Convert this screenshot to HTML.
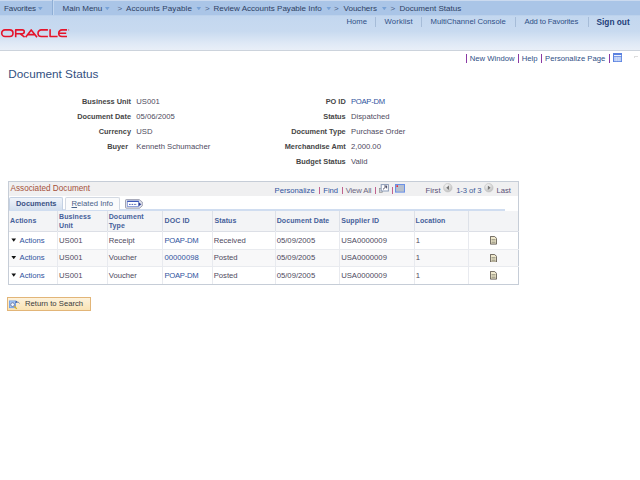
<!DOCTYPE html>
<html><head><meta charset="utf-8">
<style>
*{margin:0;padding:0;box-sizing:border-box}
html,body{width:640px;height:480px;overflow:hidden;background:#fff;font-family:"Liberation Sans",sans-serif;font-size:8px;color:#3c3c3c}
.a{position:absolute;white-space:nowrap;line-height:10px}
#nav{position:absolute;left:0;top:0;width:640px;height:16px;background:#aac5e7;border-bottom:1px solid #bcd2ec;border-top:1.2px solid #cbdaef}
#hdr{position:absolute;left:0;top:16px;width:640px;height:35px;background:linear-gradient(#c3d7ef 0%,#c8daf0 45%,#dfe9f6 80%,#e9eff8 100%);border-bottom:1px solid #ccd3dc}
.nv{top:4.1px;font-size:8.05px;color:#2e3f63}
.n2{top:17px;font-size:7.7px;color:#2f4f86}
.lbl{font-weight:bold;font-size:7.35px;color:#464646;text-align:right}
.val{font-size:7.7px;color:#4e4a5e}

.sep{position:absolute;width:1px;background:#a6bcd8}
.psep{position:absolute;width:1.3px;background:#8a3aa4}
.dd{position:absolute;top:6.8px;width:5px;height:3.4px;background:#78a2d6;clip-path:polygon(0 0,100% 0,50% 100%)}
.gt{top:4px;font-size:8px;color:#4a5f86}
.th{font-weight:bold;font-size:7.0px;letter-spacing:0.1px;color:#46609a;line-height:9px}
.td{font-size:7.7px;color:#4e4a5e}
.vl{position:absolute;width:1px;background:#e8eaef;top:211px;height:73px}
.vh{position:absolute;width:1px;background:#dde1e8;top:211px;height:20px}
.hl{position:absolute;height:1px;background:#e9ebef;left:9px;width:510px}
.gsep{position:absolute;top:187px;width:1px;height:7px;background:#c0628e}
.lnk{color:#30539e}
</style></head><body>
<div id="nav"></div>
<div id="hdr"></div>
<!-- nav row 1 -->
<div class="a nv" style="left:4px;letter-spacing:-0.13px">Favorites</div><div class="dd" style="left:37.8px"></div>
<div class="sep" style="left:51.5px;top:0;height:15px;background:#8fafd6"></div>
<div class="sep" style="left:52.5px;top:0;height:15px;background:#c4d8f0"></div>
<div class="a nv" style="left:62.5px">Main Menu</div><div class="dd" style="left:104.8px"></div>
<div class="a gt" style="left:117.5px">&gt;</div>
<div class="a nv" style="left:126px;letter-spacing:0.1px">Accounts Payable</div><div class="dd" style="left:196.3px"></div>
<div class="a gt" style="left:205px">&gt;</div>
<div class="a nv" style="left:213.5px">Review Accounts Payable Info</div><div class="dd" style="left:326.3px"></div>
<div class="a gt" style="left:334px">&gt;</div>
<div class="a nv" style="left:343.5px">Vouchers</div><div class="dd" style="left:381.8px"></div>
<div class="a gt" style="left:390.5px">&gt;</div>
<div class="a nv" style="left:399.5px">Document Status</div>
<!-- nav row 2 -->
<div class="a n2" style="left:346.5px">Home</div>
<div class="sep" style="left:375px;top:17px;height:10px"></div>
<div class="a n2" style="left:384.5px;letter-spacing:0.15px">Worklist</div>
<div class="sep" style="left:421px;top:17px;height:10px"></div>
<div class="a n2" style="left:430.5px">MultiChannel Console</div>
<div class="sep" style="left:515px;top:17px;height:10px"></div>
<div class="a n2" style="left:524.5px;letter-spacing:-0.15px">Add to Favorites</div>
<div class="sep" style="left:588px;top:17px;height:10px"></div>
<div class="a n2" style="left:596.5px;font-weight:bold;font-size:8.3px;color:#1f3f7a">Sign out</div>
<!-- logo -->
<svg class="a" style="left:0;top:29px" width="70" height="9" viewBox="0 0 70 9">
<g fill="none" stroke="#e5142b" stroke-width="1.6" stroke-linejoin="round">
<rect x="1.7" y="0.9" width="11.3" height="6.6" rx="3.3"/>
<path d="M15.7 8.2V0.9H22.3a1.9 1.9 0 0 1 0 3.9H16.5M20.3 4.8L24.6 8.2"/>
<path d="M25.6 8.2L31.2 0.9L37 8.2M27.6 5.6H34.6"/>
<path d="M47.9 0.9H41.3a3.3 3.3 0 0 0 0 6.6H47.9"/>
<path d="M50.1 0.2V7.5H57.6"/>
<path d="M67 0.9H62a3.3 3.3 0 0 0 0 6.6H67M59.2 4.2H66.2"/>
</g><circle cx="68.6" cy="0.9" r="0.6" fill="#e5142b" opacity="0.6"/></svg>
<!-- page links -->
<div class="psep" style="left:465.7px;top:54px;height:8.5px"></div>
<div class="a" style="left:469.8px;top:53.7px;font-size:7.7px;color:#2f4f86">New Window</div>
<div class="psep" style="left:517.7px;top:54px;height:8.5px"></div>
<div class="a" style="left:521.8px;top:53.7px;font-size:7.7px;color:#2f4f86">Help</div>
<div class="psep" style="left:540.8px;top:54px;height:8.5px"></div>
<div class="a" style="left:545px;top:53.7px;font-size:7.7px;color:#2f4f86">Personalize Page</div>
<div class="psep" style="left:608.5px;top:54px;height:8.5px"></div>
<svg class="a" style="left:612.8px;top:53px" width="9.2" height="9.2" viewBox="0 0 9.2 9.2"><rect x="0" y="0" width="9.2" height="9.2" fill="#5b82e0"/><rect x="1" y="2.1" width="7.2" height="1.1" fill="#fff"/><rect x="1" y="4" width="7.2" height="4.2" fill="#b9cdf5"/><path d="M3.3 4V8.2M5.9 4V8.2" stroke="#dfe8fb" stroke-width="0.6"/></svg>
<div class="a" style="left:634px;top:56px;width:4px;height:2px;border-top:1px solid #ddd;border-left:1px solid #ddd"></div>
<!-- title -->
<div class="a" style="left:8.3px;top:67px;font-size:11.75px;line-height:14px;color:#33507f">Document Status</div>
<!-- form left -->
<div class="a lbl" style="right:509px;top:96.5px">Business Unit</div><div class="a val" style="left:136.3px;top:96.5px">US001</div>
<div class="a lbl" style="right:509px;top:112.2px">Document Date</div><div class="a val" style="left:136.3px;top:112.2px">05/06/2005</div>
<div class="a lbl" style="right:509px;top:127.2px">Currency</div><div class="a val" style="left:136.3px;top:127.2px">USD</div>
<div class="a lbl" style="right:512px;top:141.8px">Buyer</div><div class="a val" style="left:136.3px;top:141.6px">Kenneth Schumacher</div>
<!-- form right -->
<div class="a lbl" style="right:294.3px;top:97px">PO ID</div><div class="a val lnk" style="left:351px;top:97px;letter-spacing:-0.3px">POAP-DM</div>
<div class="a lbl" style="right:294.3px;top:112px">Status</div><div class="a val" style="left:351px;top:112px">Dispatched</div>
<div class="a lbl" style="right:294.3px;top:126.5px">Document Type</div><div class="a val" style="left:351px;top:126.5px">Purchase Order</div>
<div class="a lbl" style="right:294.3px;top:142px">Merchandise Amt</div><div class="a val" style="left:351px;top:142px">2,000.00</div>
<div class="a lbl" style="right:294.3px;top:156.8px">Budget Status</div><div class="a val" style="left:351px;top:156.8px">Valid</div>
<!-- grid -->
<div class="a" style="left:8px;top:181px;width:511px;height:104px;border:1px solid #c6cdd7;background:#fff"></div>
<div class="a" style="left:9px;top:182px;width:509px;height:14.4px;background:#f0f0f1"></div>
<div class="a" style="left:10.5px;top:184.3px;font-size:8.2px;color:#a5503a">Associated Document</div>
<div class="a" style="left:274.5px;top:185.6px;font-size:7.7px;color:#5a5670"><span class="lnk">Personalize</span></div>
<div class="a" style="left:323.2px;top:185.6px;font-size:7.7px" class="lnk"><span class="lnk">Find</span></div>
<div class="a" style="left:345.7px;top:185.6px;font-size:7.7px;color:#6b6680;letter-spacing:-0.15px">View All</div>
<div class="gsep" style="left:318.6px"></div><div class="gsep" style="left:341.6px"></div><div class="gsep" style="left:375px"></div><div class="gsep" style="left:391.8px"></div>
<svg class="a" style="left:378.5px;top:183.5px" width="10" height="9" viewBox="0 0 10 9"><rect x="0.3" y="4.3" width="3.2" height="4" fill="#d8d8d8" stroke="#888" stroke-width="0.6"/><rect x="2.2" y="0.6" width="7.2" height="6.4" fill="#fff" stroke="#8a9bb8" stroke-width="1"/><path d="M4 5.4L7.4 2.2M5.2 2H7.6V4.4" fill="none" stroke="#3a3a55" stroke-width="0.9"/></svg>
<svg class="a" style="left:395.2px;top:183.6px" width="10" height="9" viewBox="0 0 10 9"><rect x="0.5" y="0.5" width="9" height="7.6" fill="#b2bed2" stroke="#6a90e6" stroke-width="1"/><rect x="2" y="2.6" width="6.5" height="4.6" fill="#b8c0cc"/><circle cx="2.2" cy="2.1" r="0.9" fill="#f01020"/></svg>
<div class="a" style="left:425.6px;top:185.6px;font-size:7.7px;color:#5a5078">First</div>
<div class="a" style="left:456.2px;top:185.6px;font-size:7.7px;color:#3f5c98;letter-spacing:-0.1px">1-3 of 3</div>
<div class="a" style="left:496.4px;top:185.6px;font-size:7.7px;color:#5a5078">Last</div>
<svg class="a" style="left:443.3px;top:183px" width="10" height="10" viewBox="0 0 10 10"><defs><radialGradient id="cg" cx="0.4" cy="0.3" r="0.8"><stop offset="0" stop-color="#f6f6f6"/><stop offset="1" stop-color="#b9b9b9"/></radialGradient></defs><circle cx="4.8" cy="4.7" r="4.3" fill="url(#cg)" stroke="#c4c4c4" stroke-width="0.6"/><path d="M6 2.5V6.9L3.2 4.7Z" fill="#777"/></svg>
<svg class="a" style="left:483.5px;top:183px" width="10" height="10" viewBox="0 0 10 10"><circle cx="4.8" cy="4.7" r="4.3" fill="url(#cg)" stroke="#c4c4c4" stroke-width="0.6"/><path d="M3.8 2.5V6.9L6.6 4.7Z" fill="#777"/></svg>
<!-- tabs -->
<div class="a" style="left:9px;top:209.3px;width:495.5px;height:1.3px;background:#d0ddf0"></div>
<div class="a" style="left:9px;top:197px;width:54px;height:13px;background:linear-gradient(#f0f4fa,#d3dfee);border:1px solid #c4d1e3;border-bottom:none;border-radius:2px 2px 0 0"></div>
<div class="a" style="left:16px;top:199px;font-size:7.45px;font-weight:bold;color:#3a5284">Documents</div>
<div class="a" style="left:64.5px;top:197px;width:55.3px;height:12.5px;background:#fafbfc;border:1px solid #d3d9e2;border-bottom:none;border-radius:2px 2px 0 0"></div>
<div class="a" style="left:71.5px;top:199px;font-size:7.7px;color:#4a6288"><u>R</u>elated Info</div>
<svg class="a" style="left:125.2px;top:198.8px" width="18" height="10" viewBox="0 0 18 10"><path d="M1.2 0.6H14.2L17.3 3V6.8L14.6 9.2H1.2Q0.5 9.2 0.5 8.5V1.3Q0.5 0.6 1.2 0.6Z" fill="#dfe2ec" stroke="#8d8fa3" stroke-width="0.8"/><rect x="2.3" y="2.2" width="11.4" height="5.4" fill="#fff" stroke="#6c82d2" stroke-width="0.7"/><path d="M2.3 2.4H13.7" stroke="#3b55b8" stroke-width="1.2"/><path d="M4 5.4H12" stroke="#3b4fa8" stroke-width="0.9" stroke-dasharray="1.6 1"/><path d="M13.6 3.2L16.3 5.2L13.6 7.2Z" fill="#26388f"/></svg>
<!-- header row -->
<div class="a" style="left:9px;top:211px;width:509px;height:20px;background:#f3f4f6"></div>
<div class="hl" style="top:231px;background:#dcdfe6"></div>
<div class="a" style="left:9px;top:250px;width:509px;height:16px;background:#f8f8f9"></div>
<div class="hl" style="top:249px"></div>
<div class="hl" style="top:266px"></div>
<div class="vl" style="left:57px"></div><div class="vh" style="left:57px"></div><div class="vl" style="left:107px"></div><div class="vh" style="left:107px"></div><div class="vl" style="left:162px"></div><div class="vh" style="left:162px"></div><div class="vl" style="left:212px"></div><div class="vh" style="left:212px"></div><div class="vl" style="left:275px"></div><div class="vh" style="left:275px"></div><div class="vl" style="left:339px"></div><div class="vh" style="left:339px"></div><div class="vl" style="left:413.5px"></div><div class="vh" style="left:413.5px"></div><div class="vl" style="left:468px"></div><div class="vh" style="left:468px"></div>
<div class="a th" style="left:10px;top:216.2px">Actions</div>
<div class="a th" style="left:59px;top:211.7px">Business<br>Unit</div>
<div class="a th" style="left:108.7px;top:211.7px">Document<br>Type</div>
<div class="a th" style="left:164.5px;top:216.2px">DOC ID</div>
<div class="a th" style="left:214.5px;top:216.2px">Status</div>
<div class="a th" style="left:276.7px;top:216.2px">Document Date</div>
<div class="a th" style="left:341.2px;top:216.2px">Supplier ID</div>
<div class="a th" style="left:415.5px;top:216.2px">Location</div>
<div class="a" style="left:11.4px;top:238.4px;width:4.7px;height:3.3px;background:#111;clip-path:polygon(0 0,100% 0,50% 100%)"></div>
<div class="a td lnk" style="left:19.5px;top:235.7px">Actions</div>
<div class="a td" style="left:59px;top:235.7px">US001</div>
<div class="a td" style="left:108.7px;top:235.7px">Receipt</div>
<div class="a td lnk" style="left:164.5px;top:235.7px;letter-spacing:-0.3px">POAP-DM</div>
<div class="a td" style="left:213.7px;top:235.7px">Received</div>
<div class="a td" style="left:276.7px;top:235.7px">05/09/2005</div>
<div class="a td" style="left:341.2px;top:235.7px">USA0000009</div>
<div class="a td" style="left:415.7px;top:235.7px">1</div>
<svg class="a" style="left:490px;top:236.2px" width="7" height="8.5" viewBox="0 0 7 8.5"><path d="M0.4 0.4H4.6L6.6 2.4V8.1H0.4Z" fill="#efe8cc" stroke="#5a544c" stroke-width="0.9"/><path d="M1.5 3.5H5.5M1.5 5H5.5M1.5 6.5H5.5" stroke="#7a7a6a" stroke-width="0.6"/></svg>
<div class="a" style="left:11.4px;top:255.9px;width:4.7px;height:3.3px;background:#111;clip-path:polygon(0 0,100% 0,50% 100%)"></div>
<div class="a td lnk" style="left:19.5px;top:253.2px">Actions</div>
<div class="a td" style="left:59px;top:253.2px">US001</div>
<div class="a td" style="left:108.7px;top:253.2px">Voucher</div>
<div class="a td lnk" style="left:164.5px;top:253.2px">00000098</div>
<div class="a td" style="left:213.7px;top:253.2px">Posted</div>
<div class="a td" style="left:276.7px;top:253.2px">05/09/2005</div>
<div class="a td" style="left:341.2px;top:253.2px">USA0000009</div>
<div class="a td" style="left:415.7px;top:253.2px">1</div>
<svg class="a" style="left:490px;top:253.7px" width="7" height="8.5" viewBox="0 0 7 8.5"><path d="M0.4 0.4H4.6L6.6 2.4V8.1H0.4Z" fill="#efe8cc" stroke="#5a544c" stroke-width="0.9"/><path d="M1.5 3.5H5.5M1.5 5H5.5M1.5 6.5H5.5" stroke="#7a7a6a" stroke-width="0.6"/></svg>
<div class="a" style="left:11.4px;top:273.4px;width:4.7px;height:3.3px;background:#111;clip-path:polygon(0 0,100% 0,50% 100%)"></div>
<div class="a td lnk" style="left:19.5px;top:270.7px">Actions</div>
<div class="a td" style="left:59px;top:270.7px">US001</div>
<div class="a td" style="left:108.7px;top:270.7px">Voucher</div>
<div class="a td lnk" style="left:164.5px;top:270.7px;letter-spacing:-0.3px">POAP-DM</div>
<div class="a td" style="left:213.7px;top:270.7px">Posted</div>
<div class="a td" style="left:276.7px;top:270.7px">05/09/2005</div>
<div class="a td" style="left:341.2px;top:270.7px">USA0000009</div>
<div class="a td" style="left:415.7px;top:270.7px">1</div>
<svg class="a" style="left:490px;top:271.2px" width="7" height="8.5" viewBox="0 0 7 8.5"><path d="M0.4 0.4H4.6L6.6 2.4V8.1H0.4Z" fill="#efe8cc" stroke="#5a544c" stroke-width="0.9"/><path d="M1.5 3.5H5.5M1.5 5H5.5M1.5 6.5H5.5" stroke="#7a7a6a" stroke-width="0.6"/></svg>
<!-- button -->
<div class="a" style="left:7px;top:297.2px;width:83.5px;height:13.4px;background:linear-gradient(#fdf2dc,#fae3b4);border:1px solid #e2b578"></div>
<svg class="a" style="left:9px;top:299.5px" width="12" height="10" viewBox="0 0 12 10"><rect x="0" y="0.5" width="7" height="7.6" fill="#6d9ce4"/><rect x="0.8" y="1.3" width="5.4" height="6" fill="#a8c6f2"/><circle cx="3.6" cy="4.6" r="1.9" fill="#f4f8ff" stroke="#5a6a98" stroke-width="0.8"/><path d="M5.2 6.3L7.8 8.9" stroke="#d8b020" stroke-width="1.3"/><path d="M6.2 2.6L7.6 0.8L8.4 2.8Z" fill="#1f3f8f"/><path d="M7.6 2Q9.3 1.6 10.6 3.4" fill="none" stroke="#3a5aa8" stroke-width="0.7"/></svg>
<div class="a" style="left:25px;top:299.3px;font-size:7.7px;color:#3a3a3a">Return to Search</div>
</body></html>
